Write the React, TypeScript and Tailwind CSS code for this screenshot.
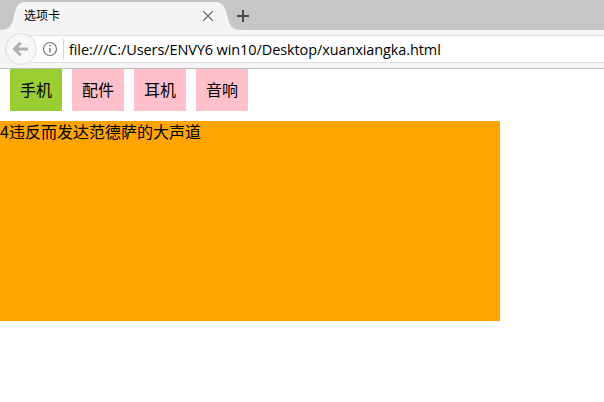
const tabs = ["手机", "配件", "耳机", "音响"];

function TabStrip() {
  return (
    <div className="relative h-[30px] bg-[#c6c6c6]">
      <svg className="absolute left-0 top-0" width="260" height="30" viewBox="0 0 260 30">
        <path
          d="M0 30C7 30 11 27 13 20L15.500 10C17 4.500 20 2 26 2H214C221 2 224 5 226 11L228.500 20C230.500 27 234 30 241 30Z"
          fill="#f5f5f5"
        />
        <path d="M203.300 11.300L212.700 20.700M212.700 11.300L203.300 20.700" stroke="#555" strokeWidth="1.2" />
        <path d="M243 10V22M237 16H249" stroke="#4a4a4a" strokeWidth="2" />
      </svg>
      <span className="absolute left-6 top-1.5 text-[12px] leading-[18px]">选项卡</span>
    </div>
  );
}

function AddressBar() {
  return (
    <div className="relative flex h-[39px] items-start border-b border-[#bdbdbd] bg-[#f5f5f5] pl-5 pt-[5px]">
      <div className="flex h-7 flex-1 items-center border-y border-[#e1e1e1] bg-white pl-[22px]">
        <svg width="16" height="16" viewBox="0 0 16 16" fill="none" stroke="#777" className="shrink-0">
          <circle cx="8" cy="8" r="6.500" strokeWidth="1.200" />
          <path d="M8 7V11.500M8 4V5.600" strokeWidth="1.500" />
        </svg>
        <span className="ml-[5px] h-5 w-px shrink-0 bg-[#d9d9d9]" />
        <span className="ml-[5px] whitespace-nowrap pt-px font-['Open_Sans','Noto_Sans',sans-serif] text-[14.5px] leading-5 tracking-[-0.1px]">
          file:///C:/Users/ENVY6 win10/Desktop/xuanxiangka.html
        </span>
      </div>
      <svg className="absolute left-[5px] top-[3px]" width="32" height="32" viewBox="0 0 32 32" fill="none">
        <circle cx="16" cy="16" r="15.500" fill="#f7f7f7" stroke="#dedede" />
        <path d="M9.500 16H23M15.700 9.800L9.500 16L15.700 22.200" stroke="#b0b0b0" strokeWidth="3" />
      </svg>
    </div>
  );
}

export default function App() {
  return (
    <div className="h-[402px] w-[604px] overflow-hidden bg-white font-['Noto_Sans_CJK_SC',sans-serif] text-black">
      <TabStrip />
      <AddressBar />
      <ul className="flex gap-2.5 pl-2.5">
        {tabs.map((tab, index) => (
          <li
            key={tab}
            className={`h-[42px] w-[52px] pt-[9px] text-center text-[16px] leading-[22px] ${
              index === 0 ? "bg-[#9acd32]" : "bg-[#ffc0cb]"
            }`}
          >
            {tab}
          </li>
        ))}
      </ul>
      <div className="mt-2.5 h-[200px] w-[500px] bg-[#ffa500] text-[16px] leading-5">
        4违反而发达范德萨的大声道
      </div>
    </div>
  );
}
